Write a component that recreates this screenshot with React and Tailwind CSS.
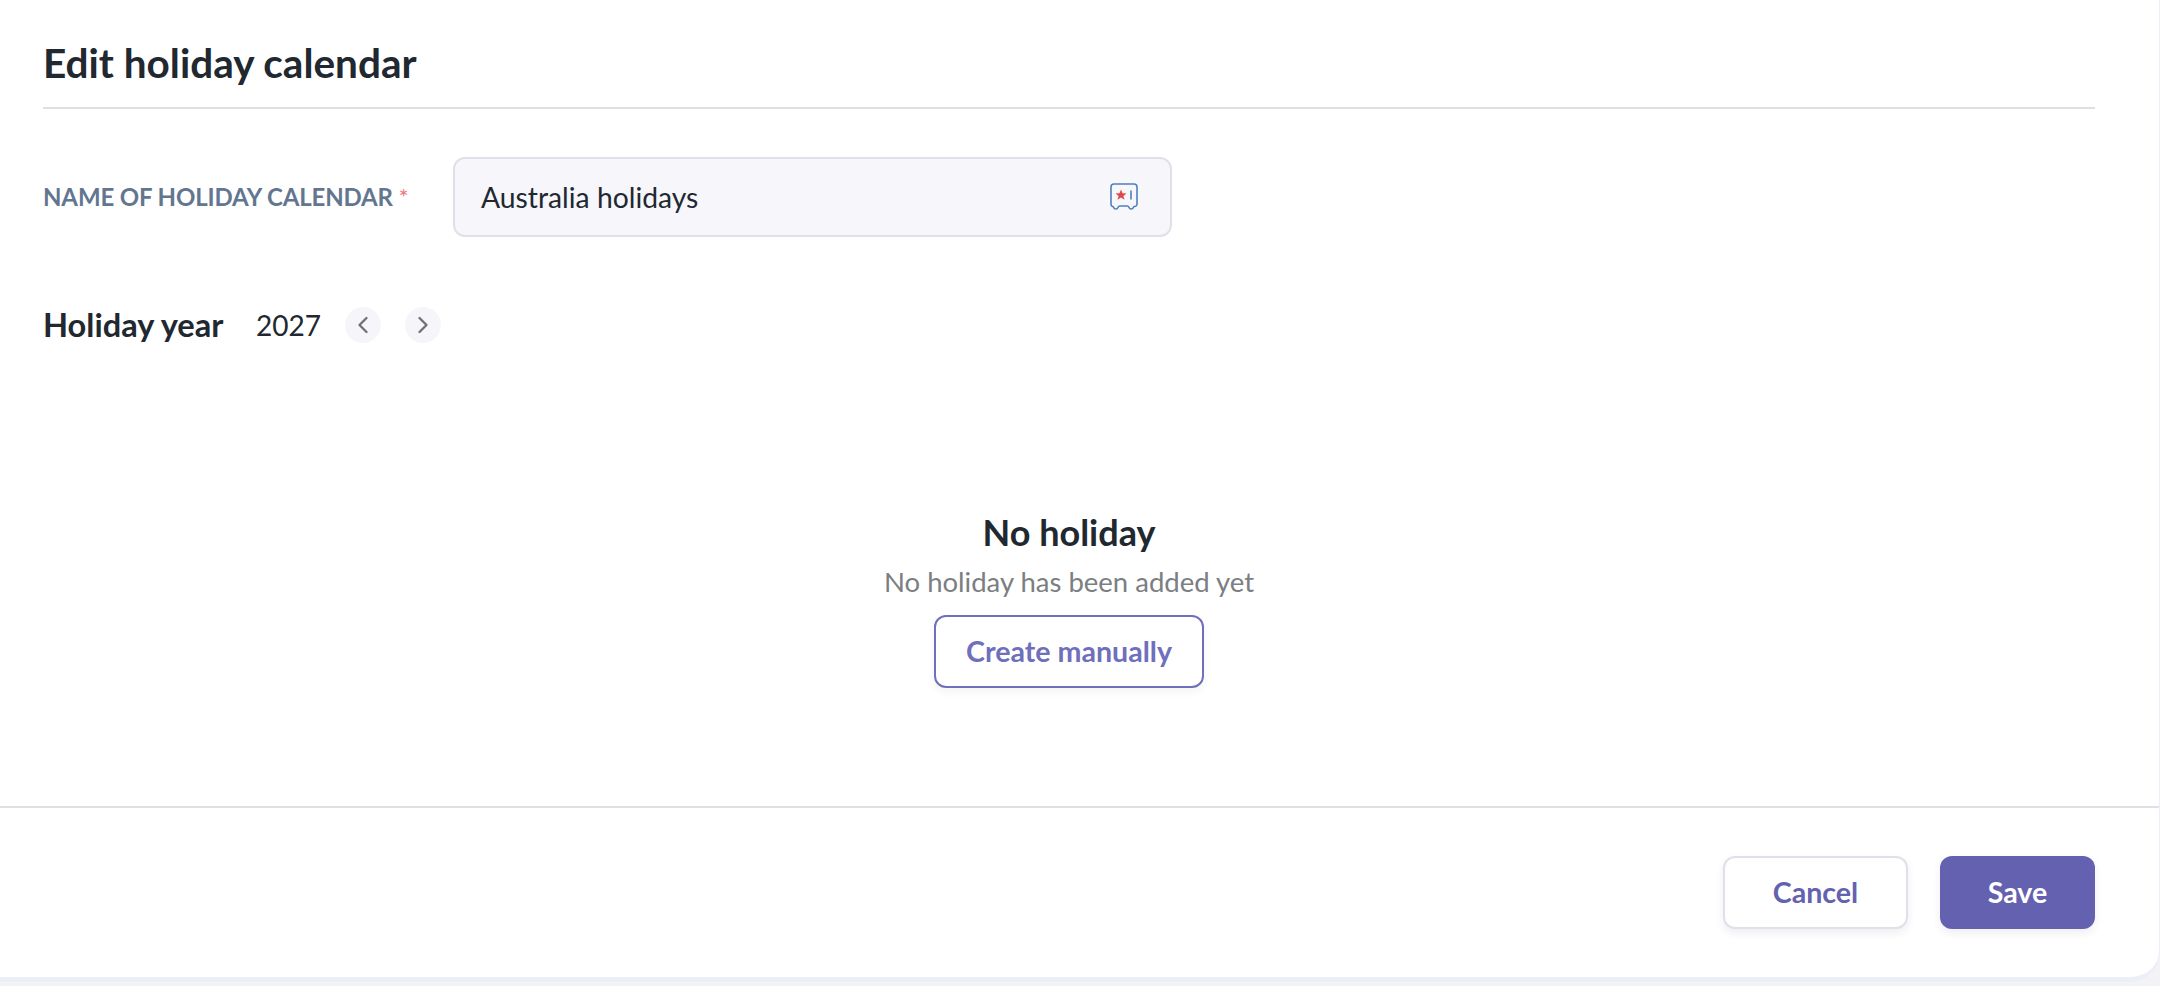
import React from 'react';
import { ChevronLeft, ChevronRight } from 'lucide-react';

const PasswordIcon = () => (
  <svg width="28" height="28" viewBox="0 0 28 28" fill="none">
    <path
      d="M4 1h20a3 3 0 0 1 3 3v17a2.500 2.500 0 0 1-2.500 2.500c-.5 0-.8.3-1 .8-.4 1-1.200 1.700-2.300 1.700-1.100 0-1.900-.7-2.300-1.700-.3-.8-.9-1.300-1.700-1.300h-7.400c-.8 0-1.400.5-1.700 1.300-.4 1-1.200 1.700-2.300 1.700-1.100 0-1.900-.7-2.300-1.700-.2-.5-.5-.8-1-.8A2.500 2.500 0 0 1 1 21V4a3 3 0 0 1 3-3Z"
      stroke="#4f80bd"
      strokeWidth="1.600"
    />
    <path d="M21 7.500v9" stroke="#4f80bd" strokeWidth="1.600" />
    <path
      d="M11 6.500l1.500 3.700 4 .2-3.100 2.500 1.100 3.900-3.500-2.200-3.500 2.200 1.100-3.900-3.100-2.500 4-.2Z"
      fill="#e0474c"
    />
  </svg>
);

const YearButton = ({ icon: Icon }) => (
  <button className="w-9 h-9 rounded-full bg-[#f6f6fa] flex items-center justify-center text-[#6f7175]">
    <Icon className="w-[28px] h-[28px]" strokeWidth={2} />
  </button>
);

export default function App() {
  return (
    <div className="w-[2160px] h-[986px] bg-[#f3f3f5] overflow-hidden font-['Lato',sans-serif] text-[#212830]">
      <div className="w-[2160px] h-[982px] bg-white border-r border-b-[5px] border-[#eceefa] rounded-br-[30px] flex flex-col">
        {/* Form area */}
        <div className="h-[806px] pl-[43px] pr-[64px]">
          <div className="h-[109px] pt-[39px] border-b-2 border-[#dfe0e3]">
            <h1 className="text-[40.500px] leading-[48px] font-bold">Edit holiday calendar</h1>
          </div>

          <div className="flex items-center mt-[48px]">
            <label className="w-[410px] text-[24px] tracking-[-0.14px] font-bold text-[#627690] leading-8">
              NAME OF HOLIDAY CALENDAR <span className="text-[#f0787f] font-normal">*</span>
            </label>
            <div className="w-[719px] h-[80px] rounded-xl bg-[#f6f6fb] border-2 border-[#dfe1e9] pl-[26px] pr-[32px] flex items-center justify-between">
              <span className="text-[28.300px]">Australia holidays</span>
              <PasswordIcon />
            </div>
          </div>

          <div className="flex items-center mt-[70px]">
            <h2 className="text-[32.600px] font-bold leading-9 w-[213px]">Holiday year</h2>
            <span className="text-[28px] leading-9 w-[89px]">2027</span>
            <div className="flex gap-[24px]">
              <YearButton icon={ChevronLeft} />
              <YearButton icon={ChevronRight} />
            </div>
          </div>

          <div className="flex flex-col items-center mt-[167px]">
            <h3 className="text-[36px] font-bold leading-[44px]">No holiday</h3>
            <p className="text-[27.500px] leading-[36px] text-[#7b7e82] mt-[10px]">No holiday has been added yet</p>
            <button className="w-[270px] h-[73px] mt-[15px] rounded-xl border-2 border-[#6f6fbb] text-[#6f6fbb] text-[28.600px] font-bold shadow-[0_4px_8px_rgba(40,40,80,0.05)]">
              Create manually
            </button>
          </div>
        </div>

        {/* Footer */}
        <div className="border-t-2 border-[#dfe0e3] flex justify-end gap-8 pt-[48px] pr-[64px]">
          <button className="w-[185px] h-[73px] rounded-xl border-2 border-[#dfe1e9] bg-white text-[#6361b0] text-[28.600px] font-bold shadow-[0_4px_8px_rgba(40,40,80,0.08)]">
            Cancel
          </button>
          <button className="w-[155px] h-[73px] rounded-xl bg-[#6361b0] text-white text-[28.600px] font-bold shadow-[0_4px_8px_rgba(40,40,80,0.08)]">
            Save
          </button>
        </div>
      </div>
    </div>
  );
}
